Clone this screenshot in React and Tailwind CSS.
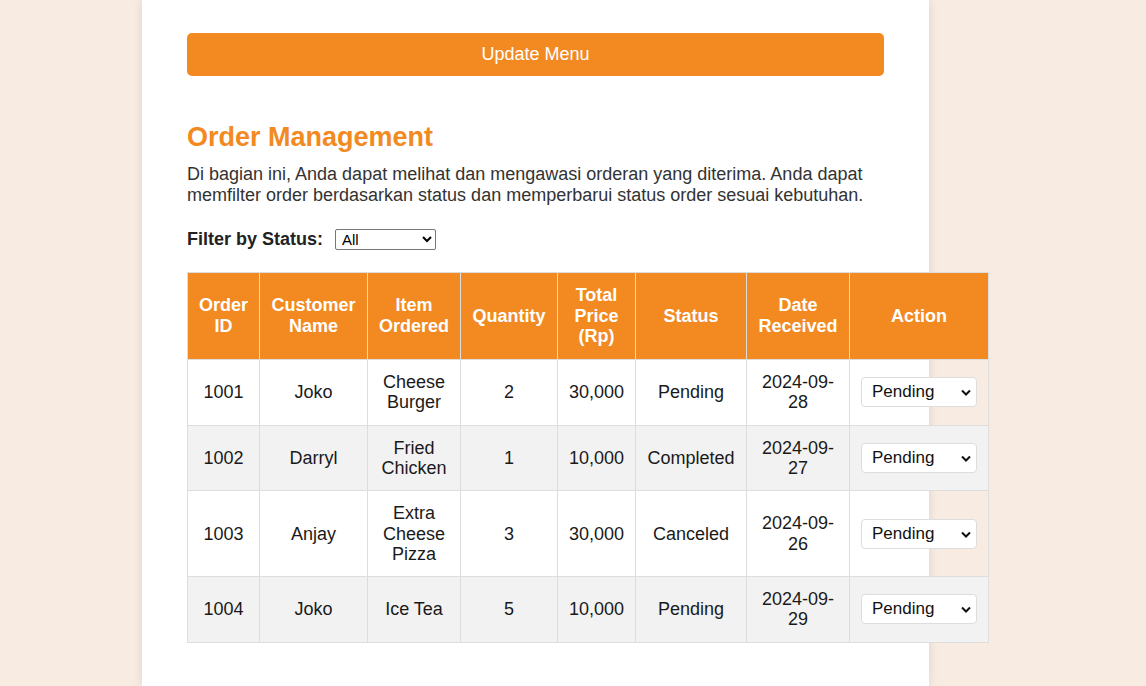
import { useState } from "react";

const orders = [
  { id: 1001, customer: "Joko", item: "Cheese Burger", qty: 2, total: "30,000", status: "Pending", date: "2024-09-28" },
  { id: 1002, customer: "Darryl", item: "Fried Chicken", qty: 1, total: "10,000", status: "Completed", date: "2024-09-27" },
  { id: 1003, customer: "Anjay", item: "Extra Cheese Pizza", qty: 3, total: "30,000", status: "Canceled", date: "2024-09-26" },
  { id: 1004, customer: "Joko", item: "Ice Tea", qty: 5, total: "10,000", status: "Pending", date: "2024-09-29" },
];

const headers = [
  { label: "Order ID", w: "w-[72px]" },
  { label: "Customer Name", w: "w-[108px]" },
  { label: "Item Ordered", w: "w-[93px]" },
  { label: "Quantity", w: "w-[97px]" },
  { label: "Total Price (Rp)", w: "w-[78px]" },
  { label: "Status", w: "w-[111px]" },
  { label: "Date Received", w: "w-[103px]" },
  { label: "Action", w: "w-[139px]" },
];

export default function App() {
  const [filter, setFilter] = useState("All");

  return (
    <div className="min-h-screen bg-[#f7ebe2] font-['Liberation_Sans',Arial,sans-serif] text-[#333]">
      <div className="ml-[142px] w-[787px] min-h-[686px] bg-white px-[45px] pt-[33px] pb-10 shadow-[0_0_10px_rgba(0,0,0,0.1)]">
        <button className="w-full h-[43px] rounded-[5px] bg-[#f28a21] text-white text-[18px]">Update Menu</button>

        <h2 className="mt-[46px] text-[27px] leading-[30px] font-bold text-[#f28a21]">Order Management</h2>
        <p className="mt-[12px] text-[18px] leading-[21px] text-[#333]">
          Di bagian ini, Anda dapat melihat dan mengawasi orderan yang diterima. Anda dapat memfilter order berdasarkan status dan memperbarui status order sesuai kebutuhan.
        </p>

        <div className="mt-[20px] flex items-center gap-3">
          <label className="text-[18px] font-bold text-[#222]">Filter by Status:</label>
          <select
            value={filter}
            onChange={(e) => setFilter(e.target.value)}
            className="w-[101px] h-[21px] border border-[#767676] rounded-[2px] text-[15px] text-black px-[2px] bg-white"
          >
            <option>All</option>
            <option>Pending</option>
            <option>Completed</option>
            <option>Canceled</option>
          </select>
        </div>

        <table className="mt-[19px] table-fixed w-[801px] max-w-none border-collapse text-[18px] leading-[1.15] text-[#1a1a1a]">
          <thead>
            <tr>
              {headers.map((h) => (
                <th key={h.label} className={`${h.w} border border-[#ddd] bg-[#f28a21] px-[8px] py-[12px] text-center font-bold text-white`}>
                  {h.label}
                </th>
              ))}
            </tr>
          </thead>
          <tbody className="leading-[20.3px]">
            {orders.map((o, i) => (
              <tr key={o.id} className={i % 2 === 1 ? "bg-[#f2f2f2]" : ""}>
                <td className="border border-[#ddd] px-[8px] py-[12px] text-center">{o.id}</td>
                <td className="border border-[#ddd] px-[8px] py-[12px] text-center">{o.customer}</td>
                <td className="border border-[#ddd] px-[8px] py-[12px] text-center">{o.item}</td>
                <td className="border border-[#ddd] px-[8px] py-[12px] text-center">{o.qty}</td>
                <td className="border border-[#ddd] px-[8px] py-[12px] text-center">{o.total}</td>
                <td className="border border-[#ddd] px-[8px] py-[12px] text-center">{o.status}</td>
                <td className="border border-[#ddd] px-[8px] py-[12px] text-center">{o.date.slice(0, 8)}<br />{o.date.slice(8)}</td>
                <td className="border border-[#ddd] px-[11px] py-[12px] text-center">
                  <div className="relative w-[116px]">
                    <select defaultValue="Pending" className="appearance-none w-[116px] h-[30px] rounded-[4px] border border-[#ddd] bg-white pl-[10px] text-[17px] text-[#111]">
                      <option>Pending</option>
                      <option>Completed</option>
                      <option>Canceled</option>
                    </select>
                    <svg className="pointer-events-none absolute right-[6px] top-[12px]" width="10" height="7" viewBox="0 0 10 7">
                      <path d="M1 1.5 L5 5.5 L9 1.5" fill="none" stroke="#111" strokeWidth="2" />
                    </svg>
                  </div>
                </td>
              </tr>
            ))}
          </tbody>
        </table>
      </div>
    </div>
  );
}
